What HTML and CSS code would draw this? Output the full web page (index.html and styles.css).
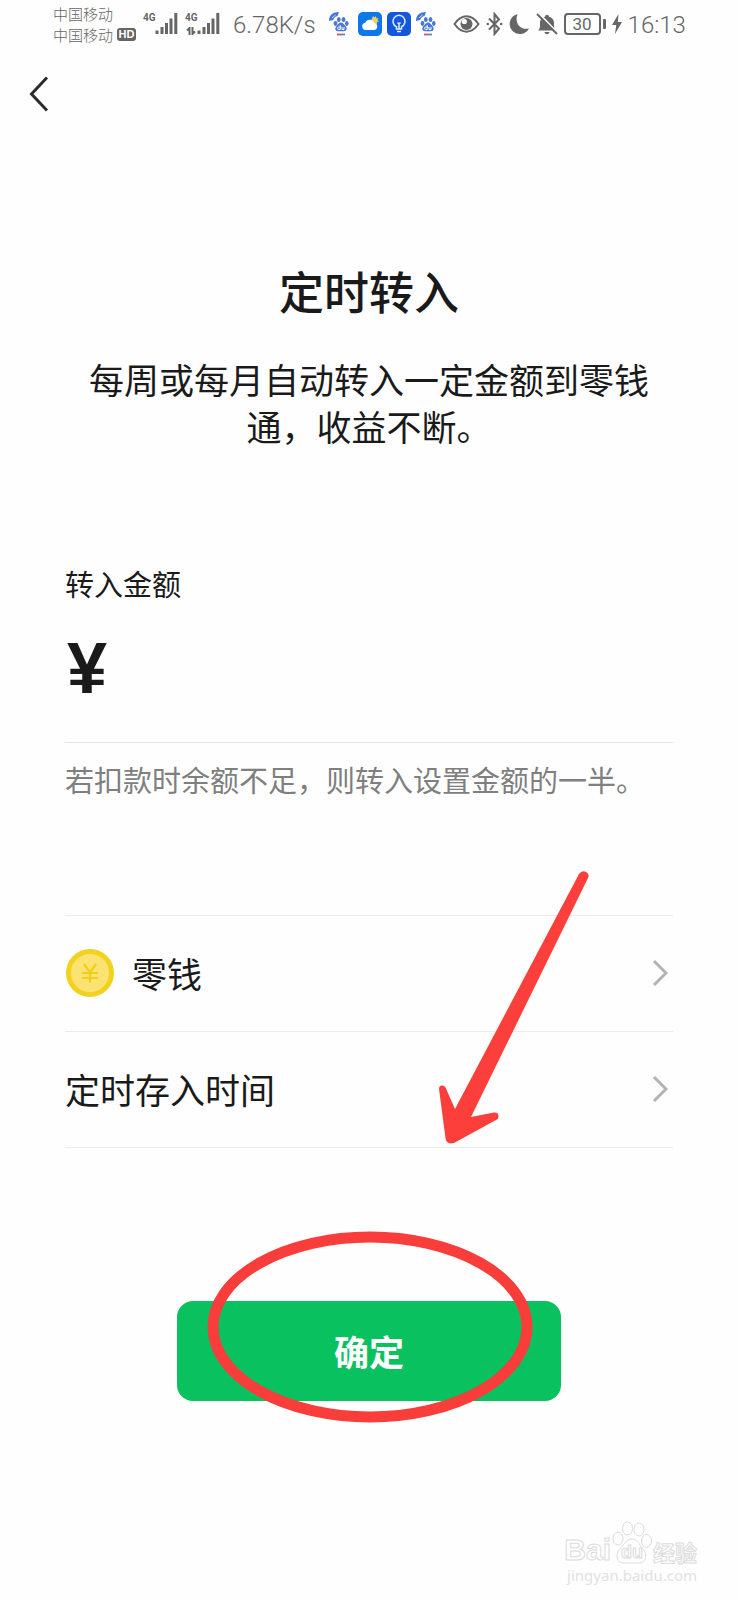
FILE: index.html
```html
<!DOCTYPE html>
<html lang="zh-CN">
<head>
<meta charset="utf-8">
<meta name="viewport" content="width=device-width, initial-scale=1">
<title>定时转入</title>
<link rel="stylesheet" href="styles.css">
</head>
<body>
<svg class="defs" width="0" height="0" aria-hidden="true">
  <symbol id="paw" viewBox="0 0 24 24">
    <path d="M0 9C0 3 4 0 10 0L8.500 4 6 5 4 8Z" fill="#3f78d8"/>
    <path d="M3 6L6.500 3" stroke="#cfe0ff" stroke-width="1"/>
    <ellipse cx="6.500" cy="11.500" rx="1.900" ry="2.400" fill="#4a78d6"/>
    <ellipse cx="9.800" cy="7.500" rx="1.900" ry="2.600" fill="#4a78d6"/>
    <ellipse cx="14.500" cy="7.500" rx="1.900" ry="2.600" fill="#4a78d6"/>
    <ellipse cx="17.800" cy="11.500" rx="1.800" ry="2.400" fill="#4a78d6"/>
    <path d="M12 10.500c2 0 3 2 4.500 3.500 2 2 1.500 5-1.500 5.300H9c-3-.3-3.500-3.300-1.500-5.300C9 12.500 10 10.500 12 10.500Z" fill="#4a78d6"/>
    <path d="M11.300 13v4.500H9.800a1.200 1.200 0 0 1 0-2.500h1.500M13 15v2.500h2V15" fill="none" stroke="#fff" stroke-width="1"/>
    <path d="M8 22.500h4" stroke="#d95454" stroke-width="1.800"/>
    <path d="M12 22.500h4" stroke="#5a80d8" stroke-width="1.800"/>
  </symbol>
  <symbol id="bars" viewBox="0 0 23 22">
    <path d="M2 17.500v3.500M7 14v7M11.500 10v11M16 5.500V21M20.800 0v21" stroke="#666" stroke-width="3"/>
  </symbol>
  <symbol id="chevron" viewBox="0 0 16 28">
    <path d="M2 2l12 12L2 26" fill="none" stroke="#b2b2b2" stroke-width="3"/>
  </symbol>
</svg>

<div class="screen">
  <header class="status">
    <div class="status-net">
      <div class="carriers">
        <span>中国移动</span>
        <span class="carrier-hd">中国移动<b class="hd">HD</b></span>
      </div>
      <div class="signal">
        <span class="gen">4G</span>
        <svg class="bars" aria-hidden="true"><use href="#bars"/></svg>
      </div>
      <div class="signal">
        <span class="gen">4G</span>
        <svg class="updown" viewBox="0 0 10 8" aria-hidden="true"><path d="M3.500 8V1L1 3.500M6.500 0v7L9 4.500" fill="none" stroke="#666" stroke-width="2"/></svg>
        <svg class="bars" aria-hidden="true"><use href="#bars"/></svg>
      </div>
    </div>
    <span class="speed">6.78K/s</span>
    <div class="status-apps">
      <svg class="app" aria-hidden="true"><use href="#paw"/></svg>
      <svg class="app" viewBox="0 0 24 24" aria-hidden="true">
        <rect width="24" height="24" rx="5" fill="#0d78ea"/>
        <path d="M15 4l1.500 1.500L18 4l.5 2.500 2-.5-1 2 1.500 1.500-2 .5v2.500L13 9z" fill="#f5cf58"/>
        <path d="M7.500 18a3.700 3.700 0 0 1-.3-7.300 5 5 0 0 1 9.300.3A3.600 3.600 0 0 1 16.500 18z" fill="#fff"/>
      </svg>
      <svg class="app" viewBox="0 0 24 24" aria-hidden="true">
        <rect width="24" height="24" rx="5" fill="#1257dc"/>
        <path d="M9.500 17v-2.200a6 6 0 1 1 5 0V17zM10 19.500h4M12 17v-5M10.500 10.500L12 12l1.500-1.500" fill="none" stroke="#e3edff" stroke-width="1.500"/>
      </svg>
      <svg class="app" aria-hidden="true"><use href="#paw"/></svg>
    </div>
    <div class="status-system">
      <svg width="27" height="20" viewBox="0 0 27 20" aria-hidden="true">
        <path d="M1.500 10C5 5 9 2.300 13.500 2.300S22 5 25.500 10C22 15 18 17.700 13.500 17.700S5 15 1.500 10Z" fill="none" stroke="#666" stroke-width="2"/>
        <circle cx="13.500" cy="10" r="6" fill="#666"/>
        <circle cx="11.300" cy="7.500" r="2.600" fill="#fff"/>
      </svg>
      <svg width="17" height="24" viewBox="0 0 17 24" aria-hidden="true">
        <path d="M3 6.500l10 10L8.500 22V2L13 7.500 3 17.500" fill="none" stroke="#666" stroke-width="2"/>
        <circle cx="1.800" cy="12" r="1.300" fill="#666"/><circle cx="15.200" cy="12" r="1.300" fill="#666"/>
      </svg>
      <svg width="21" height="22" viewBox="0 0 21 22" aria-hidden="true">
        <path d="M8.500 1A10.200 10.200 0 1 0 20 15.500C12 17.500 5 10.500 8.500 1Z" fill="#666"/>
      </svg>
      <svg width="22" height="22" viewBox="0 0 22 22" aria-hidden="true">
        <path d="M2 17.500c2-1.500 2-3 2-7.500 0-3.500 2.300-5.500 5-6.200C9 1 13 1 13 3.800c3 .7 5 3 5 6.200 0 4.500 0 6 2 7.500zM8.500 19h5c-.5 3-4.500 3-5 0Z" fill="#666"/>
        <path d="M2.500 0L22 20.500" stroke="#fefefe" stroke-width="2"/>
        <path d="M1 1l20 20" stroke="#666" stroke-width="2"/>
      </svg>
      <div class="battery"><span class="level">30</span></div>
      <svg width="10" height="20" viewBox="0 0 10 20" aria-hidden="true"><path d="M6.500 0L0 11h4.200L3 20 10 8H5.800z" fill="#666"/></svg>
      <time class="clock">16:13</time>
    </div>
  </header>

  <nav class="nav">
    <button class="back" type="button" aria-label="返回">
      <svg width="20" height="36" viewBox="0 0 20 36" aria-hidden="true"><path d="M18 1.500L2.500 18 18 34.500" fill="none" stroke="#2b2b2b" stroke-width="3"/></svg>
    </button>
  </nav>

  <main class="content">
    <h1 class="title">定时转入</h1>
    <p class="intro">每周或每月自动转入一定金额到零钱通，收益不断。</p>

    <label class="label" for="amount">转入金额</label>
    <div class="amount">
      <span class="yen">¥</span>
      <input class="amount-input" id="amount" type="text" inputmode="decimal">
    </div>
    <p class="hint">若扣款时余额不足，则转入设置金额的一半。</p>

    <div class="options">
      <a class="option" href="#source">
        <svg class="coin" viewBox="0 0 48 48" aria-hidden="true">
          <circle cx="24" cy="24" r="21.500" fill="#fae372" stroke="#f2d21f" stroke-width="5"/>
          <path d="M18 15l6 8.500L30 15M16 24h16M16 29h16M24 24v9.500" fill="none" stroke="#f0cf1c" stroke-width="2.200"/>
        </svg>
        <span class="option-name">零钱</span>
        <svg class="chevron" aria-hidden="true"><use href="#chevron"/></svg>
      </a>
      <a class="option" href="#schedule">
        <span class="option-name">定时存入时间</span>
        <svg class="chevron" aria-hidden="true"><use href="#chevron"/></svg>
      </a>
      <svg class="arrow" viewBox="430 860 170 290" aria-hidden="true">
        <path d="M579 874Q582 870 586 872T588 878L471 1117 494 1112.500Q498 1112 498.500 1115.500T496 1120L454 1143Q446 1145 445.500 1138L439 1089Q439 1085.500 442 1085.500T446 1088.500L455 1109Z" fill="#fd3f3c"/>
      </svg>
    </div>

    <div class="action">
      <button class="confirm" type="button">确定</button>
      <svg class="ring" viewBox="0 0 326 192" aria-hidden="true"><ellipse cx="163" cy="96" rx="157" ry="90" fill="none" stroke="#f83d3b" stroke-width="11"/></svg>
    </div>
  </main>

  <footer class="watermark">
    <div class="brand">
      <span class="brand-text">Bai</span>
      <span class="brand-paw">
        <svg width="40" height="44" viewBox="0 0 40 44" aria-hidden="true">
          <g fill="#fefefe" stroke="#dcdcdc">
            <ellipse cx="6" cy="17.500" rx="5" ry="6.500"/><ellipse cx="15.500" cy="7.500" rx="5" ry="6.500"/>
            <ellipse cx="27" cy="8.500" rx="5" ry="6.500"/><ellipse cx="34.500" cy="20" rx="5" ry="6.500"/>
            <path d="M20 18c6 0 7 6 11 10 5 5 3 14-4 14H12c-8 0-9-9-4-14 4-4 6-10 12-10Z"/>
          </g>
        </svg>
        <span class="brand-du">du</span>
      </span>
      <span class="brand-cn">经验</span>
    </div>
    <span class="site">jingyan.baidu.com</span>
  </footer>
</div>
</body>
</html>
```
FILE: styles.css
```css
* { box-sizing: border-box; }

body {
  margin: 0;
  background: #fefefe;
  color: #1a1a1a;
  font-family: "Noto Sans CJK SC", sans-serif;
}

h1, p { margin: 0; font-weight: 400; }
svg { display: block; flex: none; }
.defs { position: absolute; }

.screen {
  display: flex;
  flex-direction: column;
  min-height: 100vh;
}

/* status bar */
.status {
  display: flex;
  align-items: center;
  gap: 13px;
  height: 48px;
  padding-left: 53px;
  color: #666;
  white-space: nowrap;
}
.status-net { display: flex; align-items: center; gap: 7px; }
.carriers {
  display: flex;
  flex-direction: column;
  font-size: 15px;
  line-height: 21px;
  font-weight: 300;
}
.carrier-hd { display: flex; align-items: center; gap: 4px; }
.hd {
  width: 19px;
  border-radius: 3px;
  background: #666;
  color: #fefefe;
  font: 700 11px/13px "Liberation Sans", sans-serif;
  text-align: center;
}
.signal { position: relative; width: 35px; height: 22px; }
.gen {
  position: absolute;
  left: 0;
  top: 0;
  font: 700 10px/10px Roboto, sans-serif;
}
.bars { width: 23px; height: 22px; margin-left: 12px; }
.updown { position: absolute; left: 1px; bottom: 0; width: 10px; height: 8px; }
.speed, .clock { padding-top: 2px; font: 300 24px/30px Roboto, sans-serif; }
.status-apps { display: flex; gap: 5px; }
.app { width: 24px; height: 24px; }
.status-system { display: flex; align-items: center; gap: 6px; }
.battery { display: flex; align-items: center; gap: 2px; }
.battery::after {
  content: "";
  width: 3px;
  height: 10px;
  border-radius: 1px;
  background: #666;
}
.level {
  width: 37px;
  border: 2px solid #666;
  border-radius: 4px;
  font: 400 17px/18px Roboto, sans-serif;
  text-align: center;
}

/* navigation */
.nav {
  display: flex;
  align-items: center;
  height: 92px;
  padding-left: 29px;
}
.back { padding: 0; border: 0; background: none; cursor: pointer; }

/* form */
.content { padding: 121px 65px 0; }
.title {
  font-size: 45px;
  line-height: 60px;
  font-weight: 500;
  text-align: center;
}
.intro {
  margin-top: 34px;
  padding: 0 24px;
  font-size: 35px;
  line-height: 47px;
  text-align: center;
}
.label {
  display: block;
  margin-top: 114px;
  font-size: 29px;
  line-height: 40px;
}
.amount {
  display: flex;
  align-items: center;
  gap: 16px;
  height: 140px;
  padding: 0 0 10px 2px;
  border-bottom: 1px solid #e6e6e6;
}
.yen { font: 700 72px/80px "Liberation Sans", sans-serif; }
.amount-input {
  flex: 1;
  min-width: 0;
  height: 80px;
  border: 0;
  outline: 0;
  background: none;
  color: inherit;
  font: 700 72px/80px "Liberation Sans", sans-serif;
}
.hint {
  margin-top: 16px;
  color: #7f7f7f;
  font-size: 29px;
  line-height: 40px;
}

.options {
  position: relative;
  margin-top: 116px;
  border-top: 1px solid #ececec;
}
.option {
  display: flex;
  align-items: center;
  height: 116px;
  padding: 0 5px 2px 0;
  border-bottom: 1px solid #ececec;
  color: inherit;
  font-size: 35px;
  text-decoration: none;
}
.coin { width: 48px; height: 48px; margin: 0 18px 0 1px; }
.option-name { flex: 1; }
.chevron { width: 16px; height: 28px; }
.arrow {
  position: absolute;
  left: 60%;
  top: -56px;
  width: 170px;
  height: 290px;
  pointer-events: none;
}

.action {
  position: relative;
  width: 63%;
  margin: 153px auto 0;
}
.confirm {
  display: block;
  width: 100%;
  height: 100px;
  padding: 0;
  border: 0;
  border-radius: 16px;
  background: #0ac15f;
  color: #fff;
  font: 700 35px/50px "Noto Sans CJK SC", sans-serif;
  cursor: pointer;
}
.ring {
  position: absolute;
  left: 30px;
  right: 27px;
  top: -70px;
  height: 192px;
  pointer-events: none;
}

/* watermark */
.watermark {
  display: flex;
  flex-direction: column;
  align-items: flex-end;
  margin-top: auto;
  padding: 0 41px 15px;
}
.brand {
  display: flex;
  align-items: flex-end;
  gap: 1px;
  color: #fefefe;
  -webkit-text-stroke: 1px #dcdcdc;
}
.brand-text { font: 700 30px/30px "Liberation Sans", sans-serif; }
.brand-paw { position: relative; }
.brand-du {
  position: absolute;
  left: 9px;
  bottom: 3px;
  font: 700 18px/20px "Liberation Sans", sans-serif;
}
.brand-cn { font-size: 22px; line-height: 28px; font-weight: 700; }
.site {
  color: #e2e2e2;
  font: 400 15px/20px "Noto Sans", sans-serif;
}
```
